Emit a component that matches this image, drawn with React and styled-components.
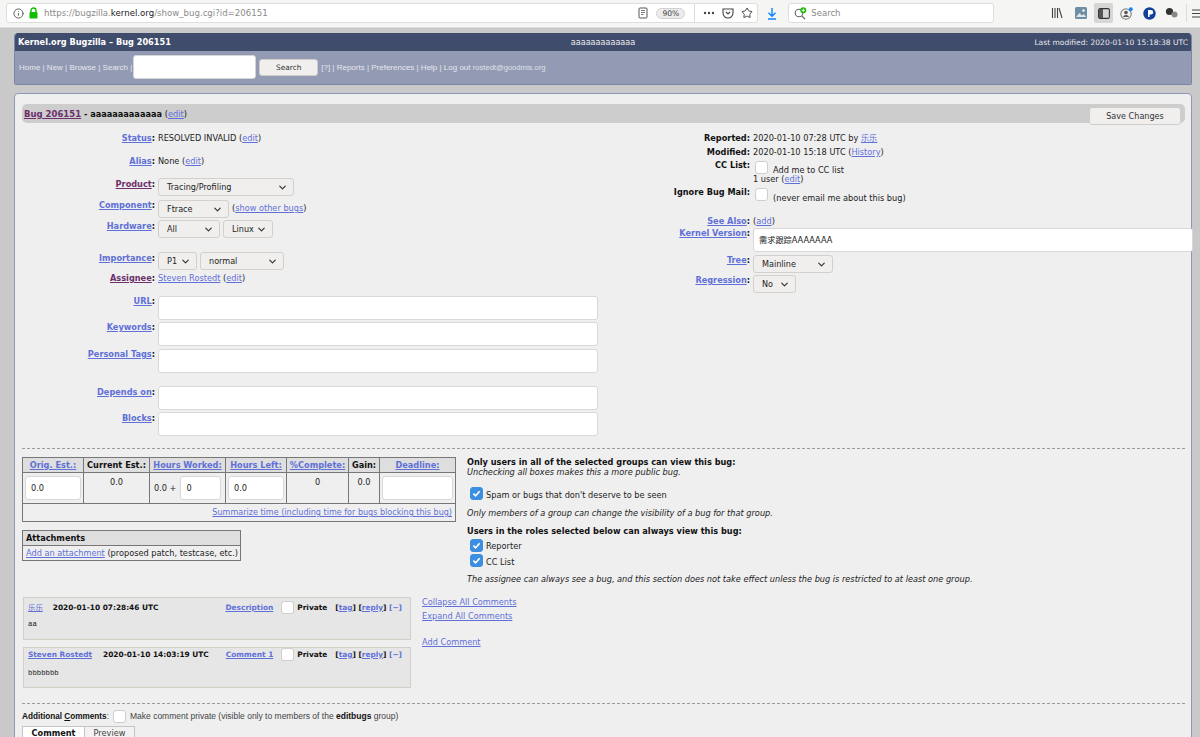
import styled, { createGlobalStyle } from "styled-components";
import { ChevronDown, Info, Star } from "lucide-react";

const Global = createGlobalStyle`
    html, body {
        margin: 0;
        height: 737px;
        overflow: hidden;
        background: #c9c9c9;
        font-family: "DejaVu Sans", "Noto Sans CJK SC", sans-serif;
        font-size: 8.2px;
        color: #222;
    }
    * { box-sizing: border-box; }
`

const Toolbar = styled.div`
    height: 28px;
    background: #f5f5f3;
    border-bottom: 1px solid #dcdcdc;
    display: flex;
    align-items: center;
    padding: 0 0 1px 6px;
`

const UrlBar = styled.div`
    width: 753px;
    height: 20px;
    background: #fff;
    border: 1px solid #dedede;
    border-radius: 3px;
    display: flex;
    align-items: center;
    padding: 0 4px 0 6px;
    color: #8a8a8a;
    font-size: 8.6px;
`

const Domain = styled.span`
    color: #222;
`

const Url = styled.span`
    margin-left: 5px;
    flex: 1;
`

const Zoom = styled.span`
    border: 1px solid #d0d0d0;
    background: #ececec;
    border-radius: 7px;
    padding: 0 5px;
    height: 11px;
    line-height: 9px;
    font-size: 7.6px;
    color: #444;
    margin: 0 9px 0 8px;
`

const Sep = styled.span`
    width: 1px;
    height: 18px;
    background: #dcdcdc;
    margin-right: ${p => p.$mr || 0}px;
`

const IconSlot = styled.span`
    display: flex;
    align-items: center;
    justify-content: center;
    width: ${p => p.$w || 20}px;
    height: 20px;
    margin-left: ${p => p.$ml || 0}px;
    margin-right: ${p => p.$mr || 0}px;
    background: ${p => p.$on ? "#d6d6d6" : "transparent"};
    border-radius: 2px;
`

const SearchBar = styled.div`
    width: 206px;
    height: 20px;
    margin-left: 2px;
    background: #fff;
    border: 1px solid #dedede;
    border-radius: 3px;
    display: flex;
    align-items: center;
    gap: 4px;
    padding-left: 5px;
    color: #888;
    font-size: 8.5px;
`

const Page = styled.div`
    padding: 5px 8px 0 14px;
`

const Header = styled.div`
    border-radius: 4px 4px 2px 2px;
    overflow: hidden;
    border: 1px solid #7d87a3;
    border-top: none;
`

const TitleBar = styled.div`
    height: 18px;
    background: #3f4c6b;
    color: #fff;
    display: grid;
    grid-template-columns: 1fr auto 1fr;
    align-items: center;
    padding: 0 3px 0 3px;
`

const TitleMain = styled.b`
    font-size: 8.2px;
`

const TitleMid = styled.span`
    color: #eee;
    font-size: 8.1px;
`

const TitleRight = styled.span`
    text-align: right;
    font-size: 7.55px;
    color: #e8e8ee;
`

const Nav = styled.div`
    height: 33px;
    background: #939ab3;
    color: #e6e8f0;
    display: flex;
    align-items: center;
    padding: 0 0 1px 4px;
    font-family: "Liberation Sans", sans-serif;
    font-size: 8px;
    gap: 3px;
`

const NavSearch = styled.div`
    width: 123px;
    height: 24px;
    margin-left: -2px;
    background: #fff;
    border: 1px solid #d5d5d5;
    border-radius: 3px;
`

const Button = styled.div`
    width: ${p => p.$w}px;
    height: 17px;
    line-height: 15px;
    text-align: center;
    background: #f0efee;
    border: 1px solid #cfcdc9;
    border-radius: 3px;
    color: #333;
    font-family: "DejaVu Sans", sans-serif;
    font-size: ${p => p.$fs || 7.4}px;
`

const NavUser = styled.span`
    color: #dfe2ea;
    font-size: 7.6px;
`

const Card = styled.div`
    margin-top: 8px;
    height: 660px;
    background: #efefef;
    border: 1px solid #8d98b8;
    border-radius: 4px 4px 0 0;
    padding: 10px 6px 0 7px;
`

const BugBar = styled.div`
    height: 19px;
    background: #cdcdcd;
    border-radius: 5px;
    display: flex;
    align-items: center;
    justify-content: space-between;
    padding: 0 4px 0 2px;
    font-weight: bold;
    font-size: 8.2px;
    color: #111;
`

const BugLink = styled.a`
    color: #6b2f6b;
    text-decoration: underline;
    font-size: 8.5px;
`

const EditNote = styled.span`
    font-weight: normal;
`

const SaveButton = styled(Button)`
    height: 18px;
    margin-top: 4px;
    font-weight: normal;
    line-height: 17px;
    font-size: 8.1px;
`

const Link = styled.a`
    color: #5f70d8;
    text-decoration: underline;
`

const SummaryLink = styled(Link)`
    font-size: 8.05px;
`

const Fields = styled.div`
    display: flex;
    margin-top: 7px;
`

const LeftCol = styled.div`
    flex: none;
    width: 599px;
`

const RightCol = styled.div`
    flex: none;
    width: 573px;
`

const Row = styled.div`
    display: grid;
    grid-template-columns: ${p => p.$label || 133}px 1fr;
    column-gap: 3px;
    height: ${p => p.$h}px;
    line-height: 14px;
`

const Label = styled.b`
    padding-top: 1px;
    text-align: right;
    color: #111;
`

const FieldLink = styled.a`
    color: ${p => p.$visited ? "#6b2f6b" : "#5f70d8"};
    text-decoration: underline;
    font-weight: bold;
`

const Value = styled.div`
    margin-top: ${p => p.$mt || 0}px;
    display: flex;
    align-items: flex-start;
    gap: ${p => p.$gap || 0}px;
    white-space: pre;
`

const Line = styled.div`
    white-space: pre;
    margin-top: ${p => p.$mt || 0}px;
    line-height: ${p => p.$lh || 14}px;
`

const SelectBox = styled.div`
    width: ${p => p.$w}px;
    height: 18px;
    background: #f0efee;
    border: 1px solid #d3d0cb;
    border-radius: 3px;
    display: flex;
    align-items: center;
    justify-content: space-between;
    padding: 0 5px 0 8px;
    font-size: 8.1px;
    color: #222;
`

const TextBox = styled.div`
    width: ${p => p.$w || "100%"};
    height: 24px;
    background: #fff;
    border: 1px solid #d8d8d8;
    border-radius: 3px;
    display: flex;
    align-items: center;
    padding: 0 5px;
`

const Box = styled.span`
    flex: none;
    width: 13px;
    height: 13px;
    margin-left: ${p => p.$ml || 0}px;
    border-radius: 3px;
    border: 1px solid ${p => p.$on ? "#3b8ee0" : "#cfcfcf"};
    background: ${p => p.$on ? "#3b8ee0" : "#fff"};
    display: inline-flex;
    align-items: center;
    justify-content: center;
`

const Dashed = styled.div`
    border-top: 1px dashed #9a9a9a;
    margin-top: ${p => p.$mt}px;
`

const TimeRow = styled.div`
    display: flex;
    gap: 10px;
    margin-top: 8px;
`

const TimeCol = styled.div`
    width: 435px;
`

const Table = styled.table`
    border-collapse: collapse;
    table-layout: fixed;
    width: ${p => p.$w}px;
    border: 1px solid #666;
    line-height: 12px;
`

const Th = styled.th`
    width: ${p => p.$w ? p.$w + "px" : "auto"};
    height: 15px;
    padding: 0;
    background: #dedede;
    border: 1px solid #777;
    font-size: 8.2px;
    color: #111;
    white-space: nowrap;
    text-align: ${p => p.$align || "center"};
`

const Td = styled.td`
    height: ${p => p.$h || 30}px;
    padding: ${p => p.$pad || "3px 2px"};
    border: 1px solid #777;
    text-align: ${p => p.$align || "center"};
    vertical-align: top;
`

const WorkedCell = styled.div`
    display: flex;
    align-items: center;
    gap: 4px;
    padding-left: 2px;
    white-space: nowrap;
`

const AttachCell = styled.td`
    height: 15px;
    padding: 0 3px;
    border: 1px solid #777;
    white-space: nowrap;
`

const AttachHead = styled(Th)`
    padding: 0 3px;
`

const Attach = styled.div`
    margin-top: 8px;
`

const Groups = styled.div`
    flex: 1;
    line-height: 10px;
`

const GroupHead = styled.b`
    display: block;
    color: #111;
    margin-top: ${p => p.$mt || 0}px;
`

const Note = styled.i`
    display: block;
    margin-top: ${p => p.$mt || 0}px;
`

const CheckRow = styled.div`
    display: flex;
    align-items: flex-start;
    gap: 3px;
    height: ${p => p.$h}px;
    margin-top: ${p => p.$mt || 0}px;
    padding-left: 3px;
`

const CheckText = styled.span`
    margin-top: ${p => p.$mt || 0}px;
    line-height: 12px;
`

const CommentRow = styled.div`
    display: flex;
    gap: 11px;
    margin-top: 13px;
    padding-left: 1px;
`

const Comments = styled.div`
    width: 388px;
    display: flex;
    flex-direction: column;
    gap: 7px;
`

const Comment = styled.div`
    height: ${p => p.$h}px;
    background: #e6e6e6;
    border: 1px solid #d0d0c6;
    padding: ${p => p.$pt}px 8px 0 4px;
    font-size: 7.4px;
`

const CommentHead = styled.div`
    display: flex;
    align-items: center;
    height: ${p => p.$h}px;
    line-height: 12px;
    white-space: nowrap;
`

const CommentDate = styled.b`
    margin-left: ${p => p.$ml}px;
    color: #111;
    flex: 1;
`

const Actions = styled.b`
    margin-left: 8px;
    color: #111;
`

const ActionToggle = styled.span`
    color: #5f70d8;
`

const Private = styled.b`
    margin-left: 3px;
    color: #111;
`

const CommentBody = styled.div`
    margin-top: ${p => p.$mt}px;
    font-size: 7.3px;
    font-family: "Liberation Mono", "DejaVu Sans", sans-serif;
`

const SideLinks = styled.div`
    line-height: 14px;
    margin-top: -2px;
`

const SideLink = styled(Link)`
    display: block;
    margin-bottom: ${p => p.$mb || 0}px;
`

const Additional = styled.div`
    display: flex;
    align-items: center;
    gap: 4px;
    height: 14px;
    margin-top: 5px;
    font-family: "Liberation Sans", sans-serif;
    font-size: 8.5px;
    color: #444;
`

const AddLabel = styled.b`
    color: #111;
    font-size: ${p => p.$fs || 8.2}px;
`

const Tabs = styled.div`
    display: flex;
    margin-top: 3px;
`

const Tab = styled.div`
    width: ${p => p.$w}px;
    height: 20px;
    border: 1px solid #c4c4c4;
    border-left: ${p => p.$active ? "1px solid #c4c4c4" : "none"};
    background: ${p => p.$active ? "#fff" : "#f2f2f2"};
    text-align: center;
    line-height: 10px;
    padding-top: 1px;
    font-weight: ${p => p.$active ? "bold" : "normal"};
    color: ${p => p.$active ? "#111" : "#444"};
`

function Select({ w, children }) {
    return (
        <SelectBox $w={w}>
            {children}
            <ChevronDown size={11} strokeWidth={2.6} color="#333" />
        </SelectBox>
    );
}

function Check({ on, ml }) {
    return (
        <Box $on={on} $ml={ml}>
            {on && (
                <svg width="9" height="9" viewBox="0 0 10 10">
                    <path d="M1.5 5.2 L4 7.6 L8.5 2.4" fill="none" stroke="#fff" strokeWidth="1.8" />
                </svg>
            )}
        </Box>
    );
}

function Field({ h, label, visited, plain, width, mt, gap, colon, children }) {
    return (
        <Row $h={h} $label={width}>
            <Label>
                {plain ? label : <FieldLink $visited={visited}>{label}</FieldLink>}
                {colon ? ":" : ""}
            </Label>
            <Value $mt={mt} $gap={gap}>{children}</Value>
        </Row>
    );
}

function BrowserToolbar() {
    return (
        <Toolbar>
            <UrlBar>
                <Info size={11} color="#555" />
                <svg width="11" height="12" viewBox="0 0 11 12" style={{ marginLeft: 4 }}>
                    <path d="M3 5 V3.5 a2.5 2.5 0 0 1 5 0 V5" fill="none" stroke="#12bc00" strokeWidth="1.4" />
                    <rect x="1.5" y="5" width="8" height="6.5" rx="1" fill="#12bc00" />
                </svg>
                <Url>https://bugzilla.<Domain>kernel.org</Domain>/show_bug.cgi?id=206151</Url>
                <svg width="10" height="12" viewBox="0 0 10 12">
                    <rect x="1" y="1" width="8" height="10" rx="1" fill="none" stroke="#555" />
                    <path d="M3 3.5 H7 M3 5.5 H7 M3 7.5 H5.5" stroke="#777" />
                </svg>
                <Zoom>90%</Zoom>
                <Sep $mr={8} />
                <svg width="12" height="4" viewBox="0 0 12 4">
                    <circle cx="2" cy="2" r="1.2" fill="#444" />
                    <circle cx="6" cy="2" r="1.2" fill="#444" />
                    <circle cx="10" cy="2" r="1.2" fill="#444" />
                </svg>
                <svg width="12" height="12" viewBox="0 0 12 12" style={{ marginLeft: 7 }}>
                    <path d="M1 2 H11 V6 A5 5 0 0 1 1 6 Z" fill="none" stroke="#444" strokeWidth="1.1" />
                    <path d="M3.8 4.8 L6 7 L8.2 4.8" fill="none" stroke="#444" strokeWidth="1.2" />
                </svg>
                <Star size={12} color="#444" style={{ marginLeft: 7 }} />
            </UrlBar>
            <IconSlot $w={28}>
                <svg width="10" height="13" viewBox="0 0 10 13">
                    <path d="M5 1 V9 M1.5 5.8 L5 9.2 L8.5 5.8 M1 12 H9" fill="none" stroke="#0a84ff" strokeWidth="1.4" />
                </svg>
            </IconSlot>
            <SearchBar>
                <svg width="13" height="13" viewBox="0 0 13 13">
                    <circle cx="5" cy="6" r="3.8" fill="none" stroke="#666" strokeWidth="1.1" />
                    <path d="M7.8 8.8 L11 12" stroke="#666" strokeWidth="1.2" />
                    <circle cx="9.3" cy="3.3" r="3" fill="#12bc00" />
                    <path d="M7.7 3.3 H10.9 M9.3 1.7 V4.9" stroke="#fff" strokeWidth="1" />
                </svg>
                Search
            </SearchBar>
            <IconSlot $ml={53} $mr={4}>
                <svg width="12" height="12" viewBox="0 0 12 12">
                    <path d="M1.5 1 V11 M4 1 V11 M6.5 1 V11 M8 1 L11 11" fill="none" stroke="#444" strokeWidth="1.1" />
                </svg>
            </IconSlot>
            <IconSlot $mr={3}>
                <svg width="12" height="12" viewBox="0 0 12 12">
                    <rect width="12" height="12" rx="1.5" fill="#6f8da3" />
                    <path d="M1 10 L4.5 6 L7 8.5 L9 7 L11 10 Z" fill="#dfe7ec" />
                    <circle cx="8.5" cy="3.5" r="1.2" fill="#fff" />
                </svg>
            </IconSlot>
            <IconSlot $w={19} $mr={3} $on>
                <svg width="12" height="11" viewBox="0 0 12 11">
                    <rect x=".6" y=".6" width="10.8" height="9.8" rx="1.5" fill="none" stroke="#333" strokeWidth="1.1" />
                    <rect x="1" y="1" width="4" height="9" fill="#555" />
                </svg>
            </IconSlot>
            <IconSlot $mr={3}>
                <svg width="13" height="13" viewBox="0 0 13 13">
                    <circle cx="6" cy="7" r="5.2" fill="none" stroke="#888" strokeWidth="1.2" />
                    <circle cx="6" cy="5.6" r="1.8" fill="#555" />
                    <path d="M2.8 10 a3.4 3 0 0 1 6.4 0 Z" fill="#555" />
                    <circle cx="10.8" cy="2.2" r="1.9" fill="#0a84ff" />
                </svg>
            </IconSlot>
            <IconSlot $mr={2}>
                <svg width="13" height="13" viewBox="0 0 13 13">
                    <circle cx="6.5" cy="6.5" r="6.2" fill="#15409a" />
                    <path d="M5 3 H8 a2 2 0 0 1 0 4.4 H6.6 V10 H5 Z" fill="#fff" />
                </svg>
            </IconSlot>
            <IconSlot $mr={5}>
                <svg width="13" height="12" viewBox="0 0 13 12">
                    <circle cx="4.5" cy="4.5" r="3.6" fill="#333" />
                    <circle cx="9.5" cy="7.5" r="3" fill="#888" />
                </svg>
            </IconSlot>
            <Sep $mr={5} />
            <svg width="8" height="9" viewBox="0 0 8 9">
                <path d="M0 1 H8 M0 4.5 H8 M0 8 H8" stroke="#444" strokeWidth="1.2" />
            </svg>
        </Toolbar>
    );
}

function CommentActions() {
    return (
        <Actions>[<Link>tag</Link>] [<Link>reply</Link>] <ActionToggle>[−]</ActionToggle></Actions>
    );
}

function App() {
    return (
        <>
            <Global />
            <BrowserToolbar />
            <Page>
                <Header>
                    <TitleBar>
                        <TitleMain>Kernel.org Bugzilla – Bug 206151</TitleMain>
                        <TitleMid>aaaaaaaaaaaaa</TitleMid>
                        <TitleRight>Last modified: 2020-01-10 15:18:38 UTC</TitleRight>
                    </TitleBar>
                    <Nav>
                        <span>Home | New | Browse | Search |</span>
                        <NavSearch />
                        <Button $w={59}>Search</Button>
                        <span>[?] | Reports | Preferences | Help | Log out <NavUser>rostedt@goodmis.org</NavUser></span>
                    </Nav>
                </Header>
                <Card>
                    <BugBar>
                        <span><BugLink>Bug 206151</BugLink> - aaaaaaaaaaaaa <EditNote>(<Link>edit</Link>)</EditNote></span>
                        <SaveButton $w={92}>Save Changes</SaveButton>
                    </BugBar>
                    <Fields>
                        <LeftCol>
                            <Field h={23} label="Status" colon mt={1}>RESOLVED INVALID (<Link>edit</Link>)</Field>
                            <Field h={23} label="Alias" colon mt={1}>None (<Link>edit</Link>)</Field>
                            <Field h={21} label="Product" visited colon mt={2}><Select w={136}>Tracing/Profiling</Select></Field>
                            <Field h={21} label="Component" colon mt={3} gap={3}>
                                <Select w={71}>Ftrace</Select>
                                <Line $mt={1}>(<Link>show other bugs</Link>)</Line>
                            </Field>
                            <Field h={32} label="Hardware" colon mt={2} gap={3}>
                                <Select w={62}>All</Select>
                                <Select w={50}>Linux</Select>
                            </Field>
                            <Field h={20} label="Importance" colon mt={2} gap={3}>
                                <Select w={39}>P1</Select>
                                <Select w={84}>normal</Select>
                            </Field>
                            <Field h={23} label="Assignee" visited colon mt={1}><Link>Steven Rostedt</Link> (<Link>edit</Link>)</Field>
                            <Field h={26} label="URL" colon mt={3}><TextBox $w="440px" /></Field>
                            <Field h={27} label="Keywords" colon mt={3}><TextBox $w="440px" /></Field>
                            <Field h={38} label="Personal Tags" colon mt={3}><TextBox $w="440px" /></Field>
                            <Field h={26} label="Depends on" colon mt={2}><TextBox $w="440px" /></Field>
                            <Field h={26} label="Blocks" colon mt={2}><TextBox $w="440px" /></Field>
                        </LeftCol>
                        <RightCol>
                            <Field h={14} label="Reported:" plain width={129} mt={1}>2020-01-10 07:28 UTC by <Link>乐乐</Link></Field>
                            <Field h={13} label="Modified:" plain width={129} mt={1}>2020-01-10 15:18 UTC (<Link>History</Link>)</Field>
                            <Field h={27} label="CC List:" plain width={129}>
                                <div>
                                    <Value $mt={4} $gap={5}>
                                        <Check ml={2} />
                                        <Line $mt={5} $lh={9}>Add me to CC list</Line>
                                    </Value>
                                    <Line $lh={9}>1 user (<Link>edit</Link>)</Line>
                                </div>
                            </Field>
                            <Field h={29} label="Ignore Bug Mail:" plain width={129} mt={4} gap={5}>
                                <Check ml={2} />
                                <Line $mt={3}>(never email me about this bug)</Line>
                            </Field>
                            <Field h={12} label="See Also" colon width={129} mt={1}><Line>(<Link>add</Link>)</Line></Field>
                            <Field h={27} label="Kernel Version" colon width={129} mt={3}>
                                <TextBox $w="440px">需求跟踪AAAAAAA</TextBox>
                            </Field>
                            <Field h={20} label="Tree" colon width={129} mt={3}><Select w={80}>Mainline</Select></Field>
                            <Field h={20} label="Regression" colon width={129} mt={3}><Select w={43}>No</Select></Field>
                        </RightCol>
                    </Fields>
                    <Dashed $mt={12} />
                    <TimeRow>
                        <TimeCol>
                            <Table $w={434}>
                                <thead>
                                    <tr>
                                        <Th $w={61}><FieldLink>Orig. Est.:</FieldLink></Th>
                                        <Th $w={66}>Current Est.:</Th>
                                        <Th $w={76}><FieldLink>Hours Worked:</FieldLink></Th>
                                        <Th $w={61}><FieldLink>Hours Left:</FieldLink></Th>
                                        <Th $w={62}><FieldLink>%Complete:</FieldLink></Th>
                                        <Th $w={31}>Gain:</Th>
                                        <Th><FieldLink>Deadline:</FieldLink></Th>
                                    </tr>
                                </thead>
                                <tbody>
                                    <tr>
                                        <Td><TextBox>0.0</TextBox></Td>
                                        <Td>0.0</Td>
                                        <Td>
                                            <WorkedCell>
                                                0.0 +
                                                <TextBox $w="41px">0</TextBox>
                                            </WorkedCell>
                                        </Td>
                                        <Td><TextBox>0.0</TextBox></Td>
                                        <Td>0</Td>
                                        <Td>0.0</Td>
                                        <Td><TextBox /></Td>
                                    </tr>
                                    <tr>
                                        <Td colSpan={7} $align="right" $pad="2px 3px" $h={16}>
                                            <SummaryLink>Summarize time (including time for bugs blocking this bug)</SummaryLink>
                                        </Td>
                                    </tr>
                                </tbody>
                            </Table>
                            <Attach>
                                <Table $w={219}>
                                    <thead>
                                        <tr><AttachHead $align="left">Attachments</AttachHead></tr>
                                    </thead>
                                    <tbody>
                                        <tr>
                                            <AttachCell><Link>Add an attachment</Link> (proposed patch, testcase, etc.)</AttachCell>
                                        </tr>
                                    </tbody>
                                </Table>
                            </Attach>
                        </TimeCol>
                        <Groups>
                            <GroupHead>Only users in all of the selected groups can view this bug:</GroupHead>
                            <Note>Unchecking all boxes makes this a more public bug.</Note>
                            <CheckRow $h={13} $mt={10}>
                                <Check on />
                                <CheckText $mt={2}>Spam or bugs that don't deserve to be seen</CheckText>
                            </CheckRow>
                            <Note $mt={8}>Only members of a group can change the visibility of a bug for that group.</Note>
                            <GroupHead $mt={8}>Users in the roles selected below can always view this bug:</GroupHead>
                            <CheckRow $h={15} $mt={3}>
                                <Check on />
                                <CheckText $mt={1}>Reporter</CheckText>
                            </CheckRow>
                            <CheckRow $h={14}>
                                <Check on />
                                <CheckText $mt={2}>CC List</CheckText>
                            </CheckRow>
                            <Note $mt={6}>The assignee can always see a bug, and this section does not take effect unless the bug is restricted to at least one group.</Note>
                        </Groups>
                    </TimeRow>
                    <CommentRow>
                        <Comments>
                            <Comment $h={43} $pt={2}>
                                <CommentHead $h={15}>
                                    <Link>乐乐</Link>
                                    <CommentDate $ml={10}>2020-01-10 07:28:46 UTC</CommentDate>
                                    <FieldLink>Description</FieldLink>
                                    <Box $ml={8}><Check /></Box>
                                    <Private>Private</Private>
                                    <CommentActions />
                                </CommentHead>
                                <CommentBody $mt={5}>aa</CommentBody>
                            </Comment>
                            <Comment $h={41} $pt={0}>
                                <CommentHead $h={13}>
                                    <FieldLink>Steven Rostedt</FieldLink>
                                    <CommentDate $ml={11}>2020-01-10 14:03:19 UTC</CommentDate>
                                    <FieldLink>Comment 1</FieldLink>
                                    <Box $ml={8}><Check /></Box>
                                    <Private>Private</Private>
                                    <CommentActions />
                                </CommentHead>
                                <CommentBody $mt={8}>bbbbbbb</CommentBody>
                            </Comment>
                        </Comments>
                        <SideLinks>
                            <SideLink>Collapse All Comments</SideLink>
                            <SideLink $mb={12}>Expand All Comments</SideLink>
                            <SideLink>Add Comment</SideLink>
                        </SideLinks>
                    </CommentRow>
                    <Dashed $mt={15} />
                    <Additional>
                        <span><AddLabel>Additional <u>C</u>omments</AddLabel>:</span>
                        <Check />
                        <span>Make comment private (visible only to members of the <AddLabel $fs={8.5}>editbugs</AddLabel> group)</span>
                    </Additional>
                    <Tabs>
                        <Tab $w={63} $active>Comment</Tab>
                        <Tab $w={50}>Preview</Tab>
                    </Tabs>
                </Card>
            </Page>
        </>
    );
}

export default App;
